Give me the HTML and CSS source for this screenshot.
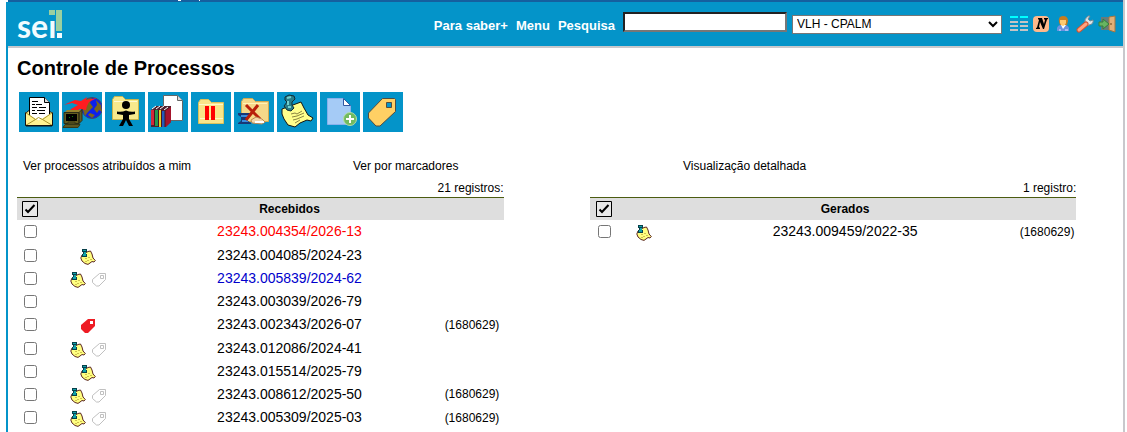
FILE: index.html
```html
<!DOCTYPE html>
<html lang="pt-BR">
<head>
<meta charset="utf-8">
<title>SEI - Controle de Processos</title>
<link rel="stylesheet" href="styles.css">
</head>
<body>
<svg class="sprite" aria-hidden="true">
  <symbol id="note" viewBox="0 0 16 16">
    <path d="M2 6L8 2.500L10.500 2L12 5L13 9L15.300 11.500L14 13L12 12.500L10 14L8 15.400L5 14.500L2 12L.8 9Z" fill="#ffff80" stroke="#4a1010" stroke-width=".9"/>
    <path d="M5 9.500h2M8 8.500h2M7 11.500h2M10 10.500h2M5 12.500h2" stroke="#d0c050"/>
    <path d="M2 0h5v3H6v2h1v3H2V5h1V3H2z" fill="#08404a"/>
    <path d="M3 1h3v1H3zM4 3h2v2H4zM3 5h3v2H3z" fill="#10a0a8"/>
  </symbol>
  <symbol id="tag" viewBox="0 0 14 14">
    <path d="M7.500.5H13.500V6.500L7 13H4.500L.5 9.500V6.500Z" fill="#fff" stroke="#c0c0c0"/>
    <path d="M8.500 2.500h3v3h-3z" fill="#fff" stroke="#c0c0c0"/>
  </symbol>
  <symbol id="tag-red" viewBox="0 0 14 14">
    <path d="M7 0H14V7L7 14H4L0 10V6Z" fill="#ee1c24"/>
    <path d="M9 2h3v3H9z" fill="#fff"/>
  </symbol>
  <symbol id="check" viewBox="0 0 16 16">
    <path d="M.5 .5h15v15H.5z" fill="#e8e8e8" stroke="#000"/>
    <path d="M3.500 8.500L6 11L12.500 4" fill="none" stroke="#000" stroke-width="2"/>
  </symbol>
</svg>

<div class="gov-bar">
  <svg class="gov-mark" viewBox="0 0 24 2" aria-hidden="true"><path d="M0 0h3v1H0zM21 0h1v1h-1z" fill="#fff"/></svg>
</div>
<div class="page">
  <header class="topbar">
    <a class="logo" href="#" aria-label="sei!">
      <svg viewBox="0 0 48 42">
        <path d="M32 7h6v5h-6zM39 7h6v21h-6z" fill="#9bd0a0"/>
        <text class="logo-text" x="0" y="35">seı</text>
        <path d="M40 30h5v5h-5z" fill="#f2fcff"/>
      </svg>
    </a>
    <nav class="tools">
      <a class="tool-link" href="#">Para saber+</a>
      <a class="tool-link" href="#">Menu</a>
      <label class="tool-link" for="search">Pesquisa</label>
      <input class="search" id="search" type="text">
      <select class="unit" aria-label="Unidade"><option>VLH - CPALM</option></select>
      <a class="tool-icon" href="#" aria-label="Exibir menu"><svg viewBox="0 0 18 18"><path d="M0 2h8M10 2h8" stroke="#00ffff" stroke-width="2"/><path d="M0 7h8M10 7h8M0 11h8M10 11h8M0 15h8M10 15h8" stroke="#c4c4c4" stroke-width="2"/></svg></a>
      <a class="tool-icon" href="#" aria-label="Novidades"><svg viewBox="0 0 18 18"><rect x="1" y="1" width="16" height="16" rx="4" fill="#ffb88a"/><path d="M4 14v-1l1-.5L7 5L6 4V3h4l2 6l1-4l-1-1V3h4v1l-1 .5L12 14h-1L8 7l-1 5l1 1v1z" fill="#000"/></svg></a>
      <a class="tool-icon" href="#" aria-label="Usuário"><svg viewBox="0 0 18 18"><path d="M3 16v-3q1-3 4-3h4q3 0 4 3v3z" fill="#6a91e0"/><path d="M7 10l2 4l3-4z" fill="#fff"/><path d="M5 15h2M11 15h3" stroke="#dbe6ff"/><path d="M5 7q-1-6 4-6t5 5l-1 4H6z" fill="#c57d20"/><path d="M6 5h6v3q-1 3-3 3t-3-3z" fill="#ffca72"/></svg></a>
      <a class="tool-icon" href="#" aria-label="Configurações"><svg viewBox="0 0 18 18"><path d="M9 8q-1-4 3-7h2l-2 3l2 2l3-1q1 4-4 5l-3 1z" fill="#dce5e9" stroke="#7b8b93"/><path d="M3 15L10 9" stroke="#d2522e" stroke-width="5" stroke-linecap="round"/><path d="M3 15L10 9" stroke="#ffa37e" stroke-width="3" stroke-linecap="round"/></svg></a>
      <a class="tool-icon" href="#" aria-label="Sair"><svg viewBox="0 0 18 18"><path d="M3 2h10v13H3z" fill="#667b7c"/><path d="M11 2l6-1v16l-6-2z" fill="#e0b078" stroke="#a7763f"/><path d="M13 8v2" stroke="#684319"/><path d="M1 7h4V4l6 5l-6 5v-3H1z" fill="#68b561" stroke="#347e3c"/></svg></a>
    </nav>
  </header>

  <main class="content">
    <h1 class="title">Controle de Processos</h1>
    <div class="actions">
      <button class="action" type="button" aria-label="Enviar e-mail"><svg viewBox="0 0 40 40">
        <path d="M7 21L19 11L33 21V34H7Z" fill="#fff392" stroke="#111"/>
        <path d="M10.500 5.500h15l5 5v16l-9 4l-11-6z" fill="#fff" stroke="#000"/><path d="M25.500 5.500v5h5" fill="#ddd" stroke="#000"/>
        <path d="M13 9.500h6M13 12.500h3M17 12.500h6M13 15.500h5M20 15.500h7M13 18.500h3M18 18.500h8M13 21.500h5M20 21.500h6" stroke="#000"/>
        <path d="M6.500 20.500l13 8l14-8v13h-27z" fill="#fff392"/><path d="M6.500 20.500l10 7l3-2l4 2l10-7M6.500 33.500l10-6M33.500 33.500l-10-6" fill="none" stroke="#a8942c"/><path d="M6.500 20.500v13h27v-13" fill="none" stroke="#111"/>
      </svg></button>
      <button class="action" type="button" aria-label="Enviar processo"><svg viewBox="0 0 40 40">
        <circle cx="30" cy="16" r="10.500" fill="#0b20ed" stroke="#394b70"/><path d="M20 15q1-9 10-9l-2 5l3 4l-5 5l-3 4zM34 8l5 5l1 7l-3-2l-2 3l-3-4l3-4zM28 21l5 2l-3 3l-4-3z" fill="#7a651d"/>
        <path d="M6 11L13 8L19 9L25 5L24 8L35 6L27 10L25 14L24 18L18 17L12 20L5 24L9 17L16 13L10 11L2 13Z" fill="#ff1c20"/>
        <path d="M2 21l3-3h15l-3 3z" fill="#96832e"/><path d="M2 20.500h15v11H2zM17 20.500l3-3v11l-3 3z" fill="#655d20" stroke="#2c2d17"/><path d="M4 22h11v7H4z" fill="#000"/><path d="M7 25.500h1M10 24.500h1" stroke="#0a820a"/><path d="M3 32.500h15l-2 3H1zM6 30h7v2H6z" fill="#5e5823" stroke="#383917"/>
      </svg></button>
      <button class="action" type="button" aria-label="Atribuir processo"><svg viewBox="0 0 40 40">
        <path d="M7.500 7.500l2-3h8l3 3h13v20h-26z" fill="#f8e98c" stroke="#c6b44d"/><path d="M9 9.500h23" stroke="#fffad2"/>
        <circle cx="21" cy="13" r="4"/><path d="M12 19.500q4.500 1 9-1q4.500 2 9 1v2.500l-6 1v4l4 7h-4l-3-6l-3 6h-4l4-7v-4l-6-1z" fill="#000"/>
      </svg></button>
      <button class="action" type="button" aria-label="Incluir documento"><svg viewBox="0 0 40 40">
        <path d="M15.500 3.500h14l5 5v20h-19z" fill="#fff" stroke="#666"/><path d="M29.500 3.500v5h5" fill="#ddd" stroke="#666"/>
        <path d="M3 18l5-4h15v16l-6 5H3z" fill="#50212d"/><path d="M3 18h4v15H3z" fill="#d3283a"/><path d="M7 18h4v16H7z" fill="#219851"/><path d="M11 18h3v17h-3z" fill="#ebcb24"/><path d="M14 19h3v16h-3z" fill="#225cba"/><path d="M17 19l6-4v15l-5 5h-1z" fill="#a4142c"/><path d="M4 17l4-3M8 17l4-3M12 17l4-3M16 18l4-3" stroke="#fff"/><path d="M6.500 18v16M10.500 18v17M13.500 18v17M17 18v17" stroke="#46151d"/>
      </svg></button>
      <button class="action" type="button" aria-label="Sobrestar processo"><svg viewBox="0 0 40 40">
        <path d="M7.500 10.500l2-3h8l3 3h12v21h-25z" fill="#f9e58a" stroke="#dac15b"/><path d="M8 12.500h24M9 26.500h23" stroke="#fff9c8"/><path d="M14 14h4v14h-4zM20 14h4v14h-4z" fill="#f00"/>
      </svg></button>
      <button class="action" type="button" aria-label="Concluir processo"><svg viewBox="0 0 40 40">
        <path d="M7.500 9.500l2-3h9l3 3h13v20h-27z" fill="#f5d889" stroke="#cfaa52"/><path d="M9 11.500h24" stroke="#fff3b5"/>
        <path d="M4 21h13v2l-3 2v4l3 2v1H4v-1l3-2v-4l-3-2z" fill="#183776"/><path d="M7 24h7M8 29h6" stroke="#398bde" stroke-width="2"/>
        <path d="M12 13L26 27M24 13L12 28" stroke="#b81f0b" stroke-width="3"/><path d="M17 28l5-3l6 2l3 3l-3 2l-10-1z" fill="#f3d6aa" stroke="#bc8954"/><path d="M21 30h9" stroke="#fff" stroke-width="2"/>
      </svg></button>
      <button class="action" type="button" aria-label="Anotações"><svg viewBox="0 0 40 40">
        <path d="M5 17L24 10L27 16L31 23L36 26L34 29L30 28L23 31L18 35L11 33L7 27L5 22Z" fill="#ffff8c" stroke="#151510"/>
        <path d="M14 22l4-1l2 1l5-3M15 25l5-1l7-3M16 28l4-1l7-3M18 31l5-3" fill="none" stroke="#8b8540"/>
        <path d="M8 5l4-2l5 1l1 3l-3 3v3l2 3l-3 3l-4-1l-3-4l3-4l-2-2z" fill="#277c88" stroke="#102d35"/><path d="M10 6l4-1M11 9v4M11 15h3" stroke="#75d1cd" stroke-width="2"/>
      </svg></button>
      <button class="action" type="button" aria-label="Incluir modelo"><svg viewBox="0 0 40 40">
        <path d="M7.500 6.500h16l7 7v19h-23z" fill="#a5cbf6" stroke="#88b1ec"/><path d="M23.500 6.500v7h7z" fill="#fff" stroke="#3158a2"/><circle cx="30" cy="27" r="6.500" fill="#72bb60" stroke="#b3dda8"/><path d="M30 23v8M26 27h8" stroke="#fff" stroke-width="2"/>
      </svg></button>
      <button class="action" type="button" aria-label="Marcadores"><svg viewBox="0 0 40 40">
        <path d="M19.500 6.500H31.500L32.500 7.500V19.500L17 34H13L5.500 26V21Z" fill="#ffd064" stroke="#504d42"/><path d="M23.500 10.500h5v5h-5z" fill="#0494c9" stroke="#504d42"/>
      </svg></button>
    </div>

    <div class="views">
      <a href="#">Ver processos atribuídos a mim</a>
      <a href="#">Ver por marcadores</a>
      <a href="#">Visualização detalhada</a>
    </div>

    <div class="lists">
      <table class="list received">
        <caption>21 registros:</caption>
        <colgroup><col class="c-check"><col class="c-icons"><col class="c-number"><col class="c-user"></colgroup>
        <thead><tr><th><button class="check-all" type="button" aria-label="Selecionar todos os recebidos"><svg><use href="#check"/></svg></button></th><td></td><th class="list-name">Recebidos</th><td></td></tr></thead>
        <tbody>
          <tr><td><input type="checkbox" aria-label="23243.004354/2026-13"></td><td></td><td><a class="number late" href="#">23243.004354/2026-13</a></td><td></td></tr>
          <tr><td><input type="checkbox" aria-label="23243.004085/2024-23"></td><td><span class="marks"><svg class="note"><use href="#note"/></svg></span></td><td><a class="number" href="#">23243.004085/2024-23</a></td><td></td></tr>
          <tr><td><input type="checkbox" aria-label="23243.005839/2024-62"></td><td><span class="marks"><svg class="note"><use href="#note"/></svg><svg class="tag"><use href="#tag"/></svg></span></td><td><a class="number opened" href="#">23243.005839/2024-62</a></td><td></td></tr>
          <tr><td><input type="checkbox" aria-label="23243.003039/2026-79"></td><td></td><td><a class="number" href="#">23243.003039/2026-79</a></td><td></td></tr>
          <tr><td><input type="checkbox" aria-label="23243.002343/2026-07"></td><td><span class="marks"><svg class="tag"><use href="#tag-red"/></svg></span></td><td><a class="number" href="#">23243.002343/2026-07</a></td><td><a href="#">(1680629)</a></td></tr>
          <tr><td><input type="checkbox" aria-label="23243.012086/2024-41"></td><td><span class="marks"><svg class="note"><use href="#note"/></svg><svg class="tag"><use href="#tag"/></svg></span></td><td><a class="number" href="#">23243.012086/2024-41</a></td><td></td></tr>
          <tr><td><input type="checkbox" aria-label="23243.015514/2025-79"></td><td><span class="marks"><svg class="note"><use href="#note"/></svg></span></td><td><a class="number" href="#">23243.015514/2025-79</a></td><td></td></tr>
          <tr><td><input type="checkbox" aria-label="23243.008612/2025-50"></td><td><span class="marks"><svg class="note"><use href="#note"/></svg><svg class="tag"><use href="#tag"/></svg></span></td><td><a class="number" href="#">23243.008612/2025-50</a></td><td><a href="#">(1680629)</a></td></tr>
          <tr><td><input type="checkbox" aria-label="23243.005309/2025-03"></td><td><span class="marks"><svg class="note"><use href="#note"/></svg><svg class="tag"><use href="#tag"/></svg></span></td><td><a class="number" href="#">23243.005309/2025-03</a></td><td><a href="#">(1680629)</a></td></tr>
        </tbody>
      </table>

      <table class="list generated">
        <caption>1 registro:</caption>
        <colgroup><col class="c-check"><col class="c-icons"><col class="c-number"><col class="c-user"></colgroup>
        <thead><tr><th><button class="check-all" type="button" aria-label="Selecionar todos os gerados"><svg><use href="#check"/></svg></button></th><td></td><th class="list-name">Gerados</th><td></td></tr></thead>
        <tbody>
          <tr><td><input type="checkbox" aria-label="23243.009459/2022-35"></td><td><span class="marks"><svg class="note"><use href="#note"/></svg></span></td><td><a class="number" href="#">23243.009459/2022-35</a></td><td><a href="#">(1680629)</a></td></tr>
        </tbody>
      </table>
    </div>
  </main>
</div>
</body>
</html>
```
FILE: styles.css
```css
* { box-sizing: border-box; }

body {
  display: flex;
  flex-direction: column;
  min-height: 100vh;
  margin: 0;
  padding: 0 2px 0 6px;
  background: #fff;
  color: #000;
  font: 12px/16px "Liberation Sans", Arial, sans-serif;
}

a { color: inherit; text-decoration: none; }
svg { display: block; }
.sprite { position: absolute; width: 0; height: 0; }

.gov-bar {
  height: 2px;
  margin-left: 2px;
  padding-left: 170px;
  background: #155f9f;
  border-right: 2px solid #c8c8cc;
}
.gov-mark { width: 24px; height: 2px; }

.page {
  flex: 1;
  border-left: 2px solid #0494c9;
  border-right: 2px solid #c8c8cc;
}

.topbar {
  display: flex;
  justify-content: space-between;
  align-items: center;
  height: 46px;
  padding: 0 7px 0 9px;
  background: #0494c9;
  border-bottom: 2px solid #c8c8cc;
}
.logo svg { width: 48px; height: 42px; }
.logo-text { font: 700 32px Lato, sans-serif; fill: #f2fcff; }

.tools { display: flex; align-items: center; gap: 8px; }
.tool-link { color: #fff; font-size: 13px; font-weight: 700; padding-top: 4px; }
.search {
  width: 164px;
  height: 20px;
  margin-bottom: 4px;
  padding: 0 4px;
  border: 2px solid;
  border-color: #222 #777 #777 #222;
  background: #fff;
  font: inherit;
}
.unit {
  width: 210px;
  height: 19px;
  margin-left: -3px;
  padding: 0;
  border: 1px solid #767676;
  border-radius: 0;
  background: #fff;
  color: #000;
  font: inherit;
}
.tool-icon + .tool-icon { margin-left: -4px; }
.tool-icon svg { width: 18px; height: 18px; }

.content { padding: 8px 0 0 9px; }
.title { margin: 0; font-size: 20px; line-height: 24px; }

.actions { display: flex; gap: 3px; padding: 12px 0 0 2px; }
.action { width: 40px; height: 40px; padding: 0; border: 0; background: #0494c9; }
.action svg { width: 40px; height: 40px; }

.views {
  display: grid;
  grid-template-columns: 30% 30% 30%;
  padding: 26px 0 0 6px;
}

.lists {
  display: grid;
  grid-template-columns: 44% 44%;
  align-items: start;
  gap: 86px;
  padding-top: 6px;
}
.list { width: 100%; table-layout: fixed; border-collapse: collapse; }
.list caption { padding-bottom: 1px; text-align: right; }
.list th, .list td { padding: 0; text-align: center; vertical-align: middle; }
.list thead tr { height: 22px; background: #dedede; border-top: 1px solid #4c5c10; }
.list tbody tr { height: 23px; }
.list tbody tr:nth-child(4n+1) { height: 24px; }
.list-name { font-size: 12px; }
.list input { display: block; width: 13px; height: 13px; margin: 0 auto; }

.received .c-check { width: 5%; }
.received .c-icons { width: 20%; }
.received .c-number { width: 62%; }
.received .c-user { width: 13%; }
.received th:first-child, .received td:first-child { padding-left: 2px; }
.generated .c-check { width: 6%; }
.generated .c-icons { width: 11%; }
.generated .c-number { width: 71%; }
.generated .c-user { width: 12%; }

.check-all { display: block; width: 16px; height: 16px; margin: 0 auto; padding: 0; border: 0; background: none; }
.check-all svg { width: 16px; height: 16px; }

.marks { display: flex; justify-content: center; align-items: center; gap: 6px; padding: 3px 3px 0 0; }
.note { width: 16px; height: 16px; }
.tag { width: 14px; height: 14px; }

.number { font-size: 14px; }
.late { color: #f00; }
.opened { color: #0000cc; }
```
